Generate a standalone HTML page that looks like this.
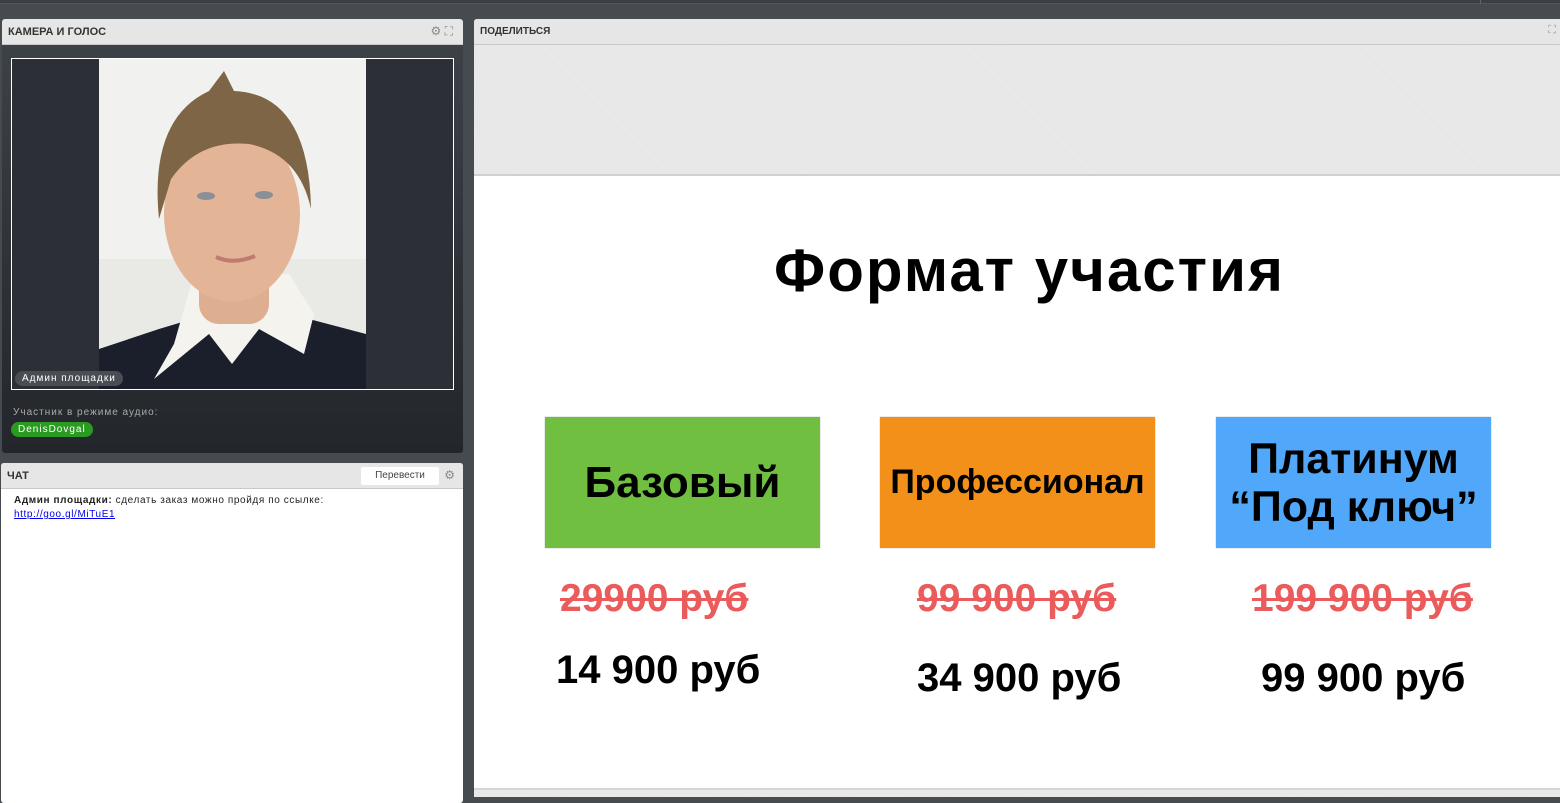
<!DOCTYPE html>
<html><head><meta charset="utf-8"><style>
*{margin:0;padding:0;box-sizing:border-box}
body{width:1560px;height:797px;overflow:hidden;background:#464b50;font-family:"Liberation Sans",sans-serif;position:relative}
.a{position:absolute}
.hdr{background:#e6e6e6;border-bottom:1px solid #c8c8c8;font-size:11px;font-weight:bold;color:#333;padding:7px 6px}
.pat{background:repeating-linear-gradient(45deg,#ececec 0 1px,#e4e4e4 1px 2px)}
.slide{font-family:"Liberation Sans",sans-serif;font-weight:bold}
.box{position:absolute;top:417px;width:275px;height:131px;display:flex;align-items:center;justify-content:center;text-align:center;color:#000;box-shadow:0 0 1px #999}
.old{position:absolute;top:577px;color:#ec5b5b;font-size:39px;text-decoration:line-through;text-decoration-thickness:3px;letter-spacing:0px}
.new{position:absolute;color:#000;font-size:40px;letter-spacing:0px}
</style></head><body>
<div class="a" style="left:0;top:0;width:1560px;height:4px;background:#3b3f44;border-bottom:1px solid #555"></div>
<div class="a" style="left:1480px;top:0;width:1px;height:4px;background:#666"></div>

<div class="a" style="left:2px;top:19px;width:461px;height:434px;border-radius:3px;overflow:hidden;background:linear-gradient(#3e434a,#23262b)">
  <div class="hdr" style="height:26px">КАМЕРА И ГОЛОС
    <span class="a" style="right:10px;top:5px;font-size:12px;color:#888;font-weight:normal">⚙ ⛶</span></div>
  <div class="a" style="left:9px;top:39px;width:443px;height:332px;border:1px solid #fff;background:#2c3036">
    <svg class="a" style="left:87px;top:0" width="267" height="330" viewBox="0 0 267 330">
      <rect width="267" height="330" fill="#f1f1ef"/>
      <rect y="200" width="267" height="130" fill="#e9e9e6"/>
      <path d="M0 290 L60 270 L110 255 L160 255 L210 260 L267 275 L267 330 L0 330Z" fill="#1b1f2c"/>
      <path d="M95 215 L75 285 L55 320 L110 275 L133 305 L160 270 L205 295 L215 255 L190 215Z" fill="#f4f3ee"/>
      <rect x="100" y="190" width="70" height="75" rx="20" fill="#deae90"/>
      <ellipse cx="133" cy="155" rx="68" ry="88" fill="#e4b496"/>
      <path d="M60 160 Q50 60 110 32 L125 12 L135 32 Q210 35 212 150 Q200 95 150 85 Q100 80 72 120Z" fill="#7d6545"/>
      <ellipse cx="107" cy="137" rx="9" ry="4" fill="#8a8f98"/>
      <ellipse cx="165" cy="136" rx="9" ry="4" fill="#8a8f98"/>
      <path d="M117 198 Q135 206 156 197" stroke="#c07a70" stroke-width="4" fill="none"/>
    </svg>
    <div class="a" style="left:3px;top:312px;background:#4a4e54;color:#fff;font-size:10px;padding:2px 7px;border-radius:8px;letter-spacing:1px">Админ площадки</div>
  </div>
  <div class="a" style="left:11px;top:388px;color:#aaa;font-size:10px;letter-spacing:1px">Участник в режиме аудио:</div>
  <div class="a" style="left:9px;top:403px;background:#2a9a22;color:#fff;font-size:10px;padding:2px 7px;border-radius:8px;letter-spacing:1px">DenisDovgal</div>
</div>

<div class="a" style="left:1px;top:463px;width:462px;height:340px;background:#fff;border-radius:3px;overflow:hidden">
  <div class="hdr" style="height:26px">ЧАТ
    <div class="a" style="left:360px;top:4px;width:78px;height:18px;background:#fff;border-radius:2px;font-weight:normal;font-size:10px;color:#444;text-align:center;line-height:18px">Перевести</div>
    <span class="a" style="right:8px;top:5px;font-size:12px;color:#888;font-weight:normal">⚙</span></div>
  <div class="a" style="left:13px;top:31px;font-size:10px;color:#222;letter-spacing:.6px;line-height:14px"><b>Админ площадки:</b> сделать заказ можно пройдя по ссылке:<br><span style="color:#00e;text-decoration:underline">http://goo.gl/MiTuE1</span></div>
</div>

<div class="a" style="left:474px;top:19px;width:1086px;height:778px;background:#fff;border-radius:3px 0 0 0;overflow:hidden">
  <div class="hdr" style="height:26px;font-size:10px">ПОДЕЛИТЬСЯ<span class="a" style="right:4px;top:5px;font-size:11px;color:#999;font-weight:normal">⛶</span></div>
  <div class="a pat" style="left:0;top:26px;width:1086px;height:131px;border-bottom:2px solid #d0d0d0"></div>
  <div class="a pat" style="left:0;top:769px;width:1086px;height:10px;border-top:2px solid #d6d6d6"></div>
</div>

<div class="slide">
  <div class="a" style="left:774px;top:236px;font-size:60px;color:#000;letter-spacing:2px">Формат участия</div>
  <div class="box" style="left:545px;background:#70bf41;font-size:44px">Базовый</div>
  <div class="box" style="left:880px;background:#f39019;font-size:34px">Профессионал</div>
  <div class="box" style="left:1216px;background:#51a7f9;font-size:43px;line-height:48px">Платинум<br>“Под ключ”</div>
  <div class="old" style="left:560px">29900 руб</div>
  <div class="old" style="left:917px">99 900 руб</div>
  <div class="old" style="left:1252px">199 900 руб</div>
  <div class="new" style="left:556px;top:648px">14 900 руб</div>
  <div class="new" style="left:917px;top:656px">34 900 руб</div>
  <div class="new" style="left:1261px;top:656px">99 900 руб</div>
</div>
</body></html>
